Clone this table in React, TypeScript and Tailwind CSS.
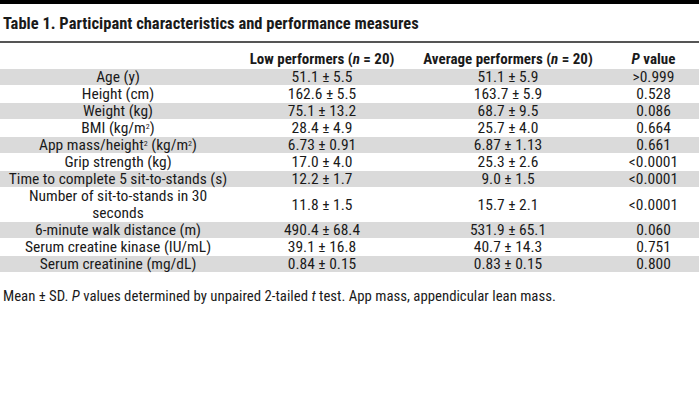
import React from "react";

type Row = { label: React.ReactNode; low: string; avg: string; p: string; gray: boolean; tall?: boolean };

const rows: Row[] = [
  { label: "Age (y)", low: "51.1 ± 5.5", avg: "51.1 ± 5.9", p: ">0.999", gray: true },
  { label: "Height (cm)", low: "162.6 ± 5.5", avg: "163.7 ± 5.9", p: "0.528", gray: false },
  { label: "Weight (kg)", low: "75.1 ± 13.2", avg: "68.7 ± 9.5", p: "0.086", gray: true },
  {
    label: (
      <>
        BMI (kg/m<sup className="text-[8px]">2</sup>)
      </>
    ),
    low: "28.4 ± 4.9",
    avg: "25.7 ± 4.0",
    p: "0.664",
    gray: false,
  },
  {
    label: (
      <>
        App mass/height<sup className="text-[8px]">2</sup> (kg/m<sup className="text-[8px]">2</sup>)
      </>
    ),
    low: "6.73 ± 0.91",
    avg: "6.87 ± 1.13",
    p: "0.661",
    gray: true,
  },
  { label: "Grip strength (kg)", low: "17.0 ± 4.0", avg: "25.3 ± 2.6", p: "<0.0001", gray: false },
  { label: "Time to complete 5 sit-to-stands (s)", low: "12.2 ± 1.7", avg: "9.0 ± 1.5", p: "<0.0001", gray: true },
  {
    label: (
      <>
        Number of sit-to-stands in 30
        <br />
        seconds
      </>
    ),
    low: "11.8 ± 1.5",
    avg: "15.7 ± 2.1",
    p: "<0.0001",
    gray: false,
    tall: true,
  },
  { label: "6-minute walk distance (m)", low: "490.4 ± 68.4", avg: "531.9 ± 65.1", p: "0.060", gray: true },
  { label: "Serum creatine kinase (IU/mL)", low: "39.1 ± 16.8", avg: "40.7 ± 14.3", p: "0.751", gray: false },
  { label: "Serum creatinine (mg/dL)", low: "0.84 ± 0.15", avg: "0.83 ± 0.15", p: "0.800", gray: true },
];

const font = { fontFamily: '"Roboto Condensed", "Liberation Sans Narrow", Roboto, sans-serif' };

export default function App() {
  return (
    <div className="w-[699px] h-[414px] bg-white text-[#1a1a1a]" style={font}>
      <div className="h-[4px] bg-black" />
      <div className="pl-[3px] pt-[10px] h-[37px] text-[16.5px] font-bold leading-[20px]">
        Table 1. Participant characteristics and performance measures
      </div>
      <div className="h-[2px] bg-[#555]" />
      <div className="grid grid-cols-[236px_172px_200px_91px] h-[25px] items-end text-[15px] font-bold leading-[17px] text-center">
        <div />
        <div>
          Low performers (<i>n</i> = 20)
        </div>
        <div>
          Average performers (<i>n</i> = 20)
        </div>
        <div>
          <i>P</i> value
        </div>
      </div>
      <div>
        {rows.map((r, i) => (
          <div
            key={i}
            className={`grid grid-cols-[236px_172px_200px_91px] items-center text-center text-[15.5px] leading-[17px] border-t border-white ${
              r.tall ? "h-[34px]" : "h-[17px]"
            } ${r.gray ? "bg-[#dadada]" : "bg-white"}`}
          >
            <div>{r.label}</div>
            <div>{r.low}</div>
            <div>{r.avg}</div>
            <div>{r.p}</div>
          </div>
        ))}
      </div>
      <div className="pl-[3px] pt-[15px] text-[14.8px] leading-[18px]">
        Mean ± SD. <i>P</i> values determined by unpaired 2-tailed <i>t</i> test. App mass, appendicular lean mass.
      </div>
    </div>
  );
}
